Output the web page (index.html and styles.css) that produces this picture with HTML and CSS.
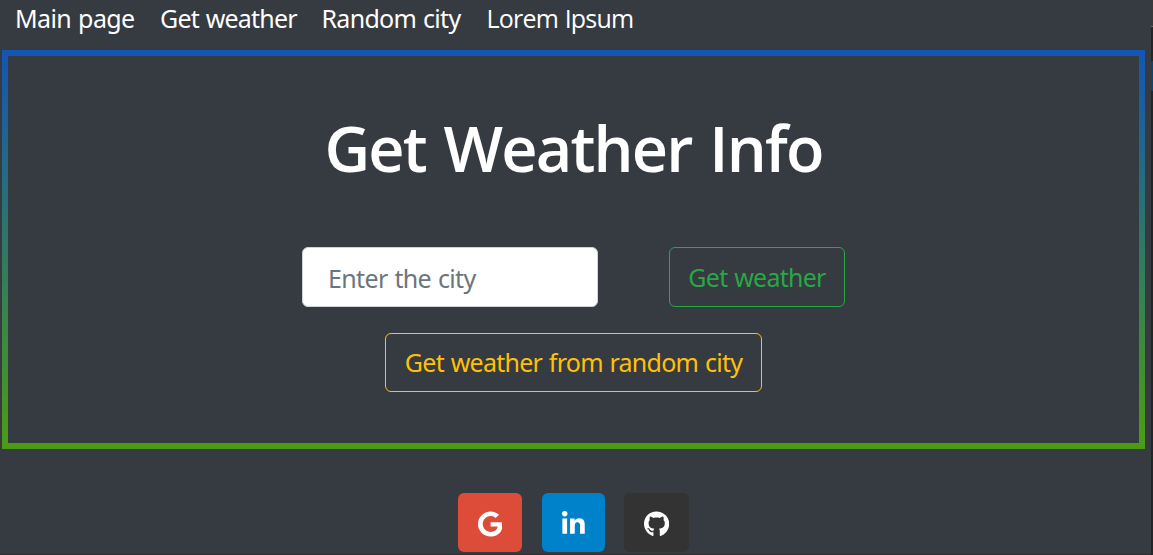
FILE: index.html
```html
<!DOCTYPE html>
<html lang="en">
<head>
<meta charset="utf-8">
<title>Get Weather Info</title>
<link rel="stylesheet" href="styles.css">
</head>
<body>
<div class="page">
  <nav class="nav">
    <a class="nav-main">Main page</a>
    <a class="nav-weather">Get weather</a>
    <a class="nav-random">Random city</a>
    <a class="nav-lorem">Lorem Ipsum</a>
  </nav>
  <main class="panel">
    <h1>Get Weather Info</h1>
    <form class="search">
      <input class="city" type="text" placeholder="Enter the city">
      <button class="btn btn-success" type="button">Get weather</button>
    </form>
    <button class="btn btn-warning" type="button">Get weather from random city</button>
  </main>
  <footer class="social">
    <a class="tile google"><svg viewBox="0 0 488 512"><path d="M488 261.8C488 403.3 391.1 504 248 504 110.8 504 0 393.2 0 256S110.8 8 248 8c66.800 0 123 24.500 166.300 64.900l-67.500 64.900C258.500 52.600 94.300 116.600 94.300 256c0 86.500 69.100 156.600 153.700 156.600 98.200 0 135-70.400 140.800-106.900H248v-85.300h236.100c2.300 12.700 3.900 24.900 3.900 41.400z"/></svg></a>
    <a class="tile linkedin"><svg viewBox="0 0 448 512"><path d="M100.280 448H7.400V148.900h92.880zM53.790 108.100C24.090 108.100 0 83.500 0 53.800a53.790 53.790 0 0 1 107.580 0c0 29.700-24.100 54.300-53.790 54.300zM447.900 448h-92.680V302.400c0-34.700-.7-79.200-48.290-79.200-48.290 0-55.690 37.700-55.690 76.700V448h-92.780V148.900h89.080v40.800h1.300c12.400-23.500 42.690-48.300 87.880-48.300 94 0 111.280 61.900 111.280 142.300V448z"/></svg></a>
    <a class="tile github"><svg viewBox="0 0 496 512"><path d="M165.900 397.400c0 2-2.300 3.600-5.200 3.600-3.300.3-5.600-1.300-5.600-3.600 0-2 2.300-3.600 5.200-3.600 3-.3 5.600 1.300 5.600 3.600zm-31.100-4.500c-.7 2 1.300 4.300 4.300 4.900 2.600 1 5.600 0 6.200-2s-1.300-4.300-4.300-5.200c-2.600-.7-5.500.3-6.200 2.300zm44.200-1.700c-2.900.7-4.900 2.600-4.600 4.900.3 2 2.900 3.300 5.900 2.600 2.900-.7 4.900-2.600 4.600-4.600-.3-1.900-3-3.200-5.900-2.900zM244.800 8C106.100 8 0 113.300 0 252c0 110.900 69.800 205.800 169.500 239.200 12.800 2.300 17.300-5.600 17.300-12.100 0-6.200-.3-40.400-.3-61.400 0 0-70 15-84.700-29.800 0 0-11.400-29.100-27.800-36.600 0 0-22.900-15.700 1.600-15.400 0 0 24.900 2 38.600 25.800 21.900 38.600 58.600 27.500 72.900 20.900 2.300-16 8.800-27.100 16-33.700-55.900-6.200-112.300-14.300-112.300-110.500 0-27.500 7.600-41.300 23.600-58.900-2.600-6.500-11.100-33.300 2.600-67.900 20.900-6.500 69 27 69 27 20-5.600 41.500-8.500 62.800-8.500s42.800 2.900 62.800 8.500c0 0 48.100-33.600 69-27 13.700 34.700 5.200 61.400 2.600 67.900 16 17.700 25.800 31.500 25.800 58.900 0 96.500-58.900 104.200-114.800 110.500 9.200 7.900 17 22.900 17 46.400 0 33.700-.3 75.400-.3 83.600 0 6.500 4.600 14.400 17.300 12.100C428.200 457.800 496 362.900 496 252 496 113.300 383.500 8 244.800 8z"/></svg></a>
  </footer>
</div>
<aside class="edge"></aside>
</body>
</html>
```
FILE: styles.css
```css
* { box-sizing: border-box; }
body {
  margin: 0;
  display: flex;
  height: 555px;
  overflow: hidden;
  background: #363a41;
  color: #fff;
  font: 25px/37px "Noto Sans", "Open Sans", sans-serif;
  word-spacing: 1px;
}
.page { width: 1151px; height: 555px; border-bottom: 1px solid #2b2d31; }
.edge {
  width: 2px;
  background: linear-gradient(#3b3a39 0 26px, #6a6a6a 26px 27px, #252526 27px 61px, #094771 61px 91px, #252526 91px);
}
.nav { display: flex; height: 50px; padding-left: 15px; white-space: nowrap; }
.nav-main { width: 145px; letter-spacing: -.6px; }
.nav-weather { width: 161.500px; letter-spacing: -.8px; }
.nav-random { width: 165px; letter-spacing: -.7px; }
.nav-lorem { letter-spacing: -.8px; font-family: "Open Sans", sans-serif; }
.panel {
  display: flex;
  flex-direction: column;
  align-items: center;
  width: 1143px;
  height: 399px;
  margin-left: 2px;
  border: 6px solid;
  border-image: linear-gradient(#1456b4, #4b9c14) 1;
}
h1 {
  margin: 52px 0 0;
  height: 139px;
  font-family: "Open Sans", sans-serif;
  font-size: 63px;
  line-height: 80px;
  font-weight: 600;
  letter-spacing: -1.8px;
  word-spacing: 3px;
  white-space: nowrap;
}
.search { display: flex; gap: 71px; margin-bottom: 26px; }
.city, .btn {
  border-radius: 6px;
  font: inherit;
  letter-spacing: -.75px;
  word-spacing: 1px;
  padding: 0;
  white-space: nowrap;
}
.city {
  width: 296px;
  height: 60px;
  padding: 1px 25px 0;
  border: 1px solid #ced4da;
  background: #fff;
  letter-spacing: -.65px;
}
.city::placeholder { color: #6c757d; opacity: 1; }
.btn { background: transparent; border: 1px solid; }
.btn-success { width: 176px; height: 60px; color: #28a745; }
.btn-warning { width: 377px; height: 59px; color: #ffc107; }
.social { display: flex; padding: 44px 0 0 458px; }
.tile {
  display: flex;
  align-items: center;
  justify-content: center;
  height: 59px;
  border-radius: 6px;
  padding-top: 2px;
}
.tile svg { height: 26px; fill: #fff; }
.google { width: 64px; background: #dd4b39; margin-right: 20px; }
.linkedin { width: 63px; background: #0082ca; margin-right: 19px; }
.github { width: 65px; background: #333; }
```
